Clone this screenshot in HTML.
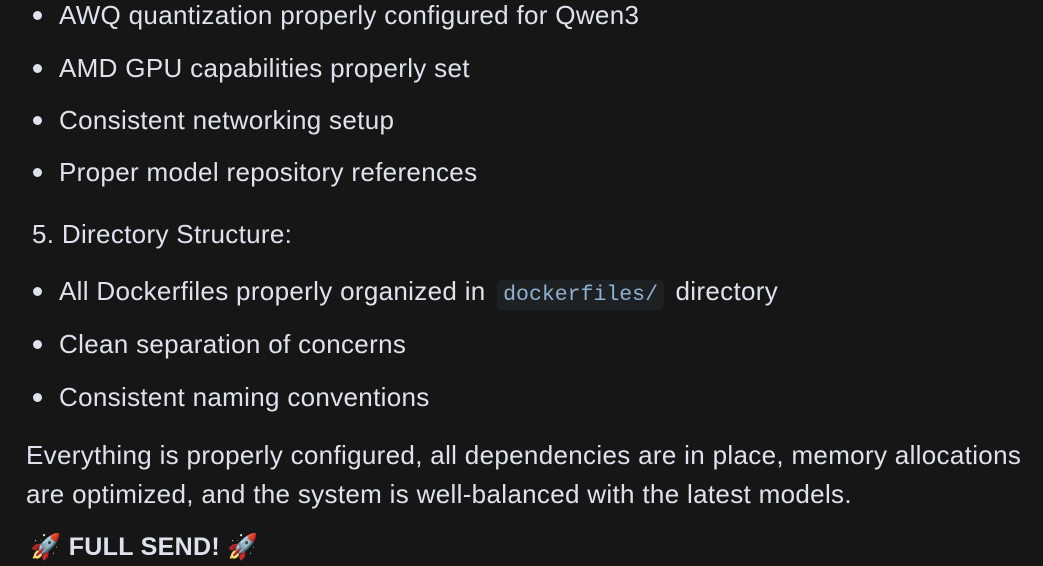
<!DOCTYPE html>
<html><head><meta charset="utf-8"><style>
html,body{margin:0;padding:0;background:#161616;width:1043px;height:566px;overflow:hidden}
body{font-family:"Liberation Sans","DejaVu Sans",sans-serif;color:#dde2ec;font-size:26px;letter-spacing:0.32px;position:relative}
.l{position:absolute;white-space:nowrap;line-height:30px;height:30px}
.b{left:59px}
.b:before{content:"";position:absolute;left:-26px;top:11px;width:9px;height:9px;border-radius:50%;background:#dde2ec}
code{font-family:"Liberation Mono",monospace;font-size:21.5px;letter-spacing:0;color:#8fb0cf;background:#1e2124;border-radius:6px;padding:3px 6px;margin:0 4px}
</style></head><body>
<div class="l b" style="top:0">AWQ quantization properly configured for Qwen3</div>
<div class="l b" style="top:53px">AMD GPU capabilities properly set</div>
<div class="l b" style="top:105px">Consistent networking setup</div>
<div class="l b" style="top:157px">Proper model repository references</div>
<div class="l" style="left:32px;top:219px">5. Directory Structure:</div>
<div class="l b" style="top:276px">All Dockerfiles properly organized in <code>dockerfiles/</code> directory</div>
<div class="l b" style="top:329px">Clean separation of concerns</div>
<div class="l b" style="top:382px">Consistent naming conventions</div>
<div class="l" style="left:26px;top:440px">Everything is properly configured, all dependencies are in place, memory allocations</div>
<div class="l" style="left:26px;top:479px">are optimized, and the system is well-balanced with the latest models.</div>
<div class="l" style="left:30px;top:532px;font-weight:bold;font-size:25px">🚀 FULL SEND! 🚀</div>
</body></html>
